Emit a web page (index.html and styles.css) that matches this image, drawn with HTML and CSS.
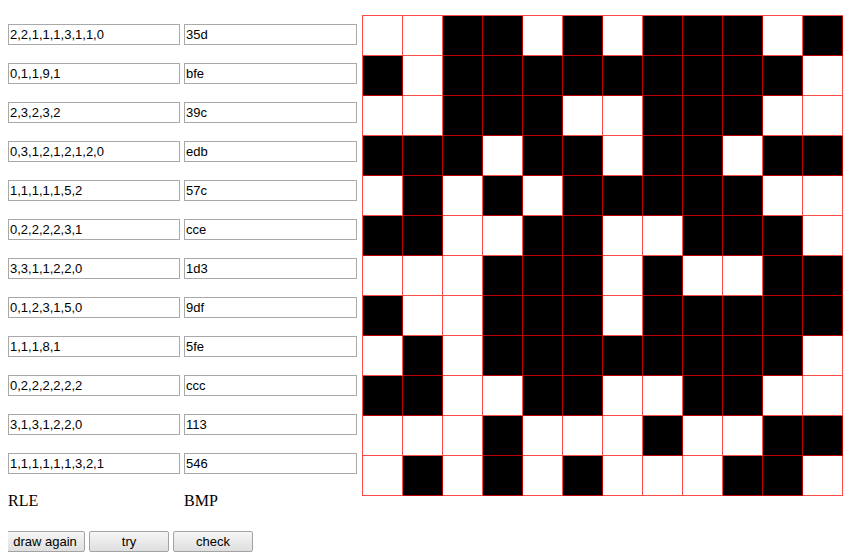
FILE: index.html
```html
<!DOCTYPE html>
<html>
<head>
<meta charset="utf-8">
<link rel="stylesheet" href="styles.css">
</head>
<body>
<div class="main">
  <div class="fields">
    <div class="row"><input class="rle" value="2,2,1,1,1,3,1,1,0"><input class="bmp" value="35d"></div>
    <div class="row"><input class="rle" value="0,1,1,9,1"><input class="bmp" value="bfe"></div>
    <div class="row"><input class="rle" value="2,3,2,3,2"><input class="bmp" value="39c"></div>
    <div class="row"><input class="rle" value="0,3,1,2,1,2,1,2,0"><input class="bmp" value="edb"></div>
    <div class="row"><input class="rle" value="1,1,1,1,1,5,2"><input class="bmp" value="57c"></div>
    <div class="row"><input class="rle" value="0,2,2,2,2,3,1"><input class="bmp" value="cce"></div>
    <div class="row"><input class="rle" value="3,3,1,1,2,2,0"><input class="bmp" value="1d3"></div>
    <div class="row"><input class="rle" value="0,1,2,3,1,5,0"><input class="bmp" value="9df"></div>
    <div class="row"><input class="rle" value="1,1,1,8,1"><input class="bmp" value="5fe"></div>
    <div class="row"><input class="rle" value="0,2,2,2,2,2,2"><input class="bmp" value="ccc"></div>
    <div class="row"><input class="rle" value="3,1,3,1,2,2,0"><input class="bmp" value="113"></div>
    <div class="row"><input class="rle" value="1,1,1,1,1,1,3,2,1"><input class="bmp" value="546"></div>
    <div class="labels"><span class="lab lab-rle">RLE</span><span class="lab">BMP</span></div>
  </div>
  <div class="grid" id="grid"></div>
</div>
<div class="buttons">
  <button class="btn">draw again</button><button class="btn">try</button><button class="btn">check</button>
</div>
<script>
var rows = ["35d","bfe","39c","edb","57c","cce","1d3","9df","5fe","ccc","113","546"];
var g = document.getElementById("grid");
rows.forEach(function(h){
  var v = parseInt(h,16);
  for (var i = 11; i >= 0; i--) {
    var c = document.createElement("div");
    c.className = "cell" + ((v >> i) & 1 ? " on" : "");
    g.appendChild(c);
  }
});
</script>
</body>
</html>
```
FILE: styles.css
```css
body {
  margin: 8px;
  font-family: "Liberation Serif", serif;
  font-size: 16px;
  color: #000;
  background: #fff;
}
.main {
  display: flex;
  align-items: flex-start;
}
.fields {
  display: flex;
  flex-direction: column;
  gap: 18px;
  padding-top: 16px;
  width: 349px;
  flex: none;
}
.row {
  display: flex;
  gap: 4px;
}
input {
  box-sizing: border-box;
  height: 21px;
  margin: 0;
  padding: 1px 1px;
  border: 1px solid #a9a9a9;
  font-family: "Liberation Sans", Arial, sans-serif;
  font-size: 13px;
  color: #000;
  background: #fff;
}
.rle { width: 172px; }
.bmp { width: 173px; }
.labels {
  display: flex;
  margin-top: 0;
  line-height: 18px;
}
.lab-rle {
  width: 176px;
}
.grid {
  flex: none;
  margin-left: 5px;
  margin-top: 7px;
  display: grid;
  grid-template-columns: repeat(12, 40px);
  grid-auto-rows: 40px;
  border-left: 1px solid #ff4a4a;
  border-top: 1px solid #ff4a4a;
}
.cell {
  box-sizing: border-box;
  border-right: 1px solid #ff4a4a;
  border-bottom: 1px solid #ff4a4a;
  background: #fff;
}
.cell.on {
  background: #000;
  border-color: #c00000;
}
.buttons {
  display: flex;
  gap: 4px;
  margin-top: 21px;
  margin-left: -3px;
}
.btn {
  box-sizing: border-box;
  width: 80px;
  height: 21px;
  margin: 0;
  padding: 0;
  border: 1px solid #a3a3a3;
  border-radius: 2px;
  background: linear-gradient(#f6f6f6, #dedede);
  font-family: "Liberation Sans", Arial, sans-serif;
  font-size: 13px;
  color: #000;
}
```
